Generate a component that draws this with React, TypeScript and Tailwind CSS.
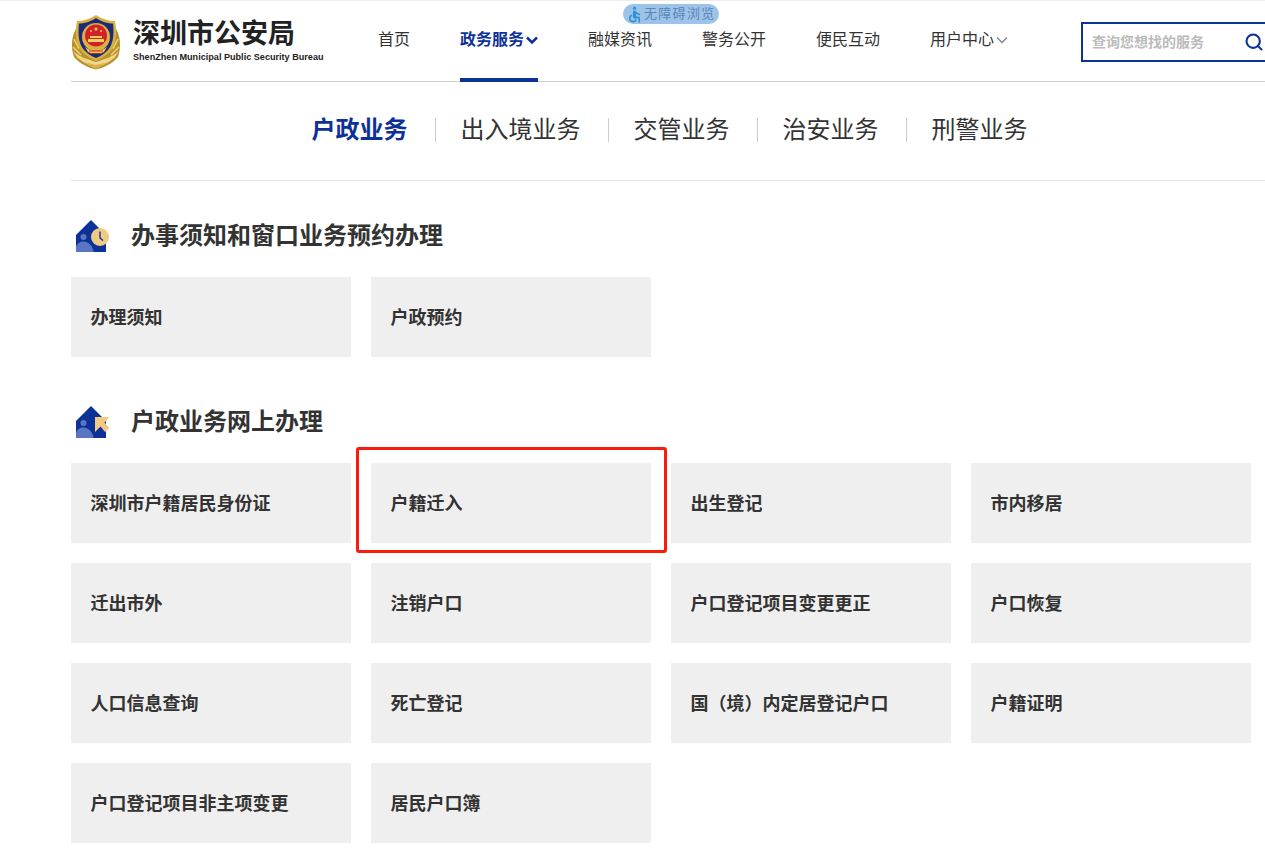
import { Search } from 'lucide-react'
import { MdAccessible } from 'react-icons/md'

const navItems = ['融媒资讯', '警务公开', '便民互动']
const tabs = ['出入境业务', '交管业务', '治安业务', '刑警业务']
const bookingCards = ['办理须知', '户政预约']
const onlineCards = [
  '深圳市户籍居民身份证',
  '户籍迁入',
  '出生登记',
  '市内移居',
  '迁出市外',
  '注销户口',
  '户口登记项目变更更正',
  '户口恢复',
  '人口信息查询',
  '死亡登记',
  '国（境）内定居登记户口',
  '户籍证明',
  '户口登记项目非主项变更',
  '居民户口簿',
]

const Emblem = () => (
  <svg width="50" height="55" viewBox="0 0 50 55" className="shrink-0">
    {/* wreath */}
    <path d="M5 14 C0 22 0 34 3 42 C9 49 18 53 25 54.500 C32 53 41 49 47 42 C50 34 50 22 45 14 L25 38 Z" fill="#b8902c" />
    <path d="M2 36 C6 44 14 49 25 53 C36 49 44 44 48 36 C42 42 34 44 25 47 C16 44 8 42 2 36 Z" fill="#efd98f" />
    <path d="M3 24 L8 34 M2 32 L10 40 M6 42 L15 45 M47 24 L42 34 M48 32 L40 40 M44 42 L35 45" stroke="#f0d678" strokeWidth="1.500" />
    <path d="M13 47 L25 50 L37 47 L25 54 Z" fill="#d9b548" />
    {/* shield */}
    <path d="M25 0 C31 4 38 6 44 6 C46 16 46 29 39 37 C35 41 29 44 25 46 C21 44 15 41 11 37 C4 29 4 16 6 6 C12 6 19 4 25 0 Z" fill="#d8b13f" />
    <path d="M25 3 C31 7 37 8.500 42 8.500 C43 18 43 28 37 35 C33 39 29 41.500 25 43 C21 41.500 17 39 13 35 C7 28 7 18 8 8.500 C13 8.500 19 7 25 3 Z" fill="#1b2a7c" />
    {/* badge */}
    <circle cx="25" cy="22" r="14" fill="#d8b13f" />
    <circle cx="25" cy="20.500" r="11" fill="#d3202a" />
    <circle cx="25" cy="14" r="1.600" fill="#f2d25c" />
    <circle cx="20" cy="16" r="1" fill="#f2d25c" />
    <circle cx="30" cy="16" r="1" fill="#f2d25c" />
    <rect x="19" y="21" width="12" height="2" fill="#f2d25c" />
    <rect x="17" y="24" width="16" height="3" fill="#f2d25c" />
    <path d="M14 32 C20 37 30 37 36 32 L33 37 C29 39 21 39 17 37 Z" fill="#f2d25c" />
    <path d="M18 36 H32 M19 38.500 H31" stroke="#c5222a" strokeWidth="1" />
  </svg>
)

const BaseHouse = () => (
  <>
    <path d="M15 0 L30 15 V32 H0 V15 Z" fill="#0d3297" />
    <circle cx="7.500" cy="17" r="3" fill="#5a76c2" />
    <path d="M0 32 V27 C1 23.500 4 21.500 7.500 21.500 C12 21.500 17 26 17.500 32 Z" fill="#5a76c2" />
  </>
)

const ClockIcon = () => (
  <svg width="40" height="32" viewBox="0 0 40 32" className="mt-[2px] shrink-0 overflow-visible">
    <BaseHouse />
    <circle cx="24" cy="17" r="9" fill="#efcb84" />
    <path d="M24 11.500 V18 L27 20.500" fill="none" stroke="#0d3297" strokeWidth="1.400" />
  </svg>
)

const CursorIcon = () => (
  <svg width="40" height="32" viewBox="0 0 40 32" className="mt-[2px] shrink-0 overflow-visible">
    <BaseHouse />
    <path d="M19 11 H33.500 L28.500 16.500 L33.500 22 L29 26 L24.500 20.500 L19 26 Z" fill="#efcb84" />
  </svg>
)

const NavChevron = ({ className, strokeWidth }: { className: string; strokeWidth: number }) => (
  <svg width="14" height="10" viewBox="0 0 14 10" className={className}>
    <path d="M3 2.500 L8 7.500 L13 2.500" fill="none" stroke="currentColor" strokeWidth={strokeWidth} />
  </svg>
)

const ServiceCard = ({ label }: { label: string }) => (
  <div className="flex h-20 w-[280px] items-center bg-[#efefef] pt-[2px] pl-5 text-[18px] font-semibold text-[#333]">
    <span className="-ml-[0.500px]">{label}</span>
  </div>
)

const SectionTitle = ({ icon, title }: { icon: React.ReactNode; title: string }) => (
  <div className="flex h-8 items-center gap-[15px] pl-[5px]">
    {icon}
    <h2 className="pt-[2px] text-[24px] leading-8 font-semibold text-[#333]">{title}</h2>
  </div>
)

export default function App() {
  return (
    <div
      className="relative h-[867px] w-[1265px] overflow-hidden border-t border-[#eeeeee] bg-white pl-[71px]"
      style={{ fontFamily: '"Liberation Sans", "Noto Sans CJK SC", sans-serif' }}
    >
      <header className="flex h-[81px] w-[1300px] items-stretch border-b border-[#cfcfcf]">
        <div className="flex w-[307px] items-start gap-3 pt-[14px]">
          <Emblem />
          <div className="pt-1">
            <div className="text-[27px] leading-[30px] font-bold text-[#222]">深圳市公安局</div>
            <div className="mt-[2px] text-[9.100px] leading-3 font-bold whitespace-nowrap text-[#222]">
              ShenZhen Municipal Public Security Bureau
            </div>
          </div>
        </div>

        <nav className="flex gap-[50px] pt-px text-[16px] leading-[76px] text-[#333]">
          <a>首页</a>
          <a className="-mt-px flex h-[81px] items-start border-b-4 border-[#0d3297] pt-px font-semibold text-[#0d3297]">
            政务服务
            <NavChevron strokeWidth={2.500} className="mt-[33px]" />
          </a>
          {navItems.map((item) => (
            <a key={item}>{item}</a>
          ))}
          <a className="flex items-start">
            用户中心
            <NavChevron strokeWidth={1.500} className="mt-[33px] text-[#888]" />
          </a>
        </nav>

        <div className="mt-[21px] ml-[73px] flex h-10 w-[200px] items-center justify-between border-2 border-[#0d3297] pr-[15px] pl-[9px]">
          <span className="pt-px text-[14px] font-semibold text-[#bbbbbb]">查询您想找的服务</span>
          <Search size={20} strokeWidth={2.500} className="text-[#0d3297]" />
        </div>
      </header>

      <div className="absolute top-[3px] left-[623px] flex h-5 w-24 items-center rounded-full bg-[#9cc3e8] pl-[2px] text-[13px] tracking-[1.300px] text-[#5a86b8]">
        <MdAccessible size={19} className="shrink-0 text-[#2f8fd8]" />
        <span className="whitespace-nowrap">无障碍浏览</span>
      </div>

      <div className="flex h-[99px] w-[1300px] border-b border-[#e5e5e5]">
        <div className="flex h-[95px] w-[1197px] items-center justify-center text-[24px] leading-8 text-[#333]">
          <span className="font-semibold text-[#0d3297]">户政业务</span>
          {tabs.map((tab) => (
            <div key={tab} className="flex items-center">
              <span className="mr-[25px] ml-[27px] h-6 w-px bg-[#cccccc]" />
              <span>{tab}</span>
            </div>
          ))}
        </div>
      </div>

      <main className="w-[1180px] pt-[38px]">
        <SectionTitle icon={<ClockIcon />} title="办事须知和窗口业务预约办理" />
        <div className="mt-[26px] grid grid-cols-[repeat(4,280px)] gap-5">
          {bookingCards.map((card) => (
            <ServiceCard key={card} label={card} />
          ))}
        </div>

        <div className="mt-[48px]">
          <SectionTitle icon={<CursorIcon />} title="户政业务网上办理" />
        </div>
        <div className="mt-[26px] grid grid-cols-[repeat(4,280px)] gap-5">
          {onlineCards.map((card) => (
            <ServiceCard key={card} label={card} />
          ))}
        </div>
      </main>

      {/* red annotation round one card */}
      <div className="absolute top-[446px] left-[356px] h-[106px] w-[311px] rounded-[3px] border-[3px] border-[#fb1a0e]" />
    </div>
  )
}
